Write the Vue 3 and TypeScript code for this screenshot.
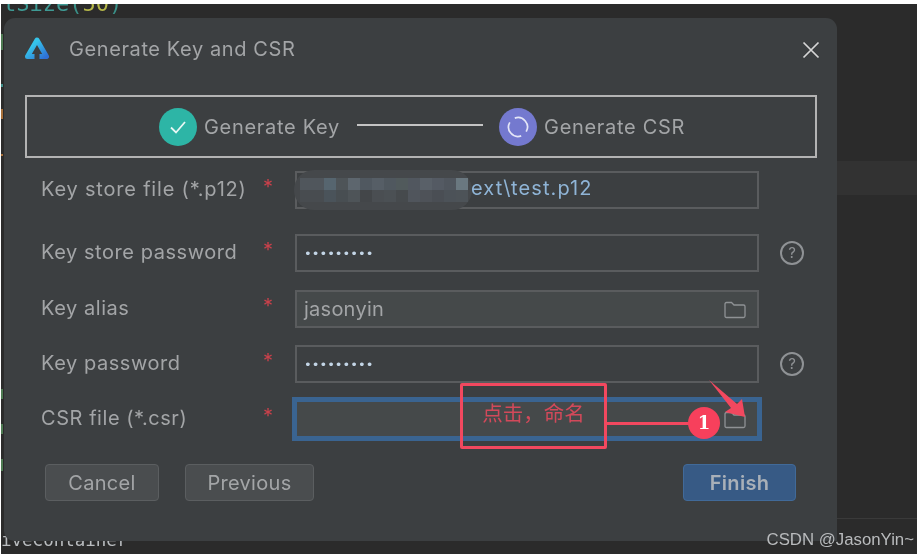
<template>
  <div class="screen">
    <div class="editor">
      <span class="code code-top"><span class="c-name">tSize</span><span class="c-paren">(</span><span class="c-num">50</span><span class="c-paren">)</span></span>
      <span class="code code-bottom">iveContainer</span>
      <span class="band"></span>
      <span class="rule"></span>
      <span class="gutter-mark" v-for="m in gutterMarks" :key="m.y" :style="{ top: m.y + 'px', height: m.h + 'px', background: m.color }"></span>

      <div class="dialog">
        <header class="title-bar">
          <svg class="logo" width="26" height="24" viewBox="0 0 26 24">
            <defs>
              <linearGradient id="logoGrad" x1="0" y1="0" x2="1" y2="1">
                <stop offset="0.3" stop-color="#35c4ea" />
                <stop offset="1" stop-color="#2f6fd6" />
              </linearGradient>
            </defs>
            <path d="M10.5 20.5 H3.5 L13 4 L22.5 20.5 H15.5" stroke="url(#logoGrad)" stroke-width="5" stroke-linejoin="round" stroke-linecap="butt" fill="none" />
            <path d="M13 12.5 L16.5 17 H14.5 V23 H11.5 V17 H9.5 Z" fill="#3c3f41" />
          </svg>
          <span class="title">Generate Key and CSR</span>
          <svg class="close" width="18" height="18" viewBox="0 0 18 18">
            <path d="M1.5 1.5 L16.5 16.5 M16.5 1.5 L1.5 16.5" stroke="#d6d6d6" stroke-width="1.7" fill="none" />
          </svg>
        </header>

        <div class="steps">
          <span class="step-icon done">
            <svg width="22" height="22" viewBox="0 0 22 22">
              <path d="M4 11.5 L9 16.5 L18 6" stroke="#e8f7f4" stroke-width="1.8" fill="none" />
            </svg>
          </span>
          <span class="step-label">Generate Key</span>
          <span class="step-line"></span>
          <span class="step-icon active">
            <svg width="24" height="24" viewBox="0 0 24 24">
              <path d="M8.8 3.1 A9.46 9.46 0 0 1 20.2 16.7 M15.2 20.9 A9.46 9.46 0 0 1 3.8 7.3" stroke="#e4e6f7" stroke-width="1.7" fill="none" />
            </svg>
          </span>
          <span class="step-label">Generate CSR</span>
        </div>

        <div class="form">
          <div class="row" v-for="row in rows" :key="row.label" :class="{ focused: row.focused }">
            <span class="label">{{ row.label }}</span>
            <span class="star">*</span>
            <div class="input" :class="{ filled: row.filled, blue: row.blue }">
              <span class="value" :class="{ dots: row.secret }">{{ row.value }}</span>
              <svg v-if="row.folder" class="folder" width="24" height="20" viewBox="0 0 24 20">
                <path d="M2 4 Q2 2.5 3.5 2.5 L8.5 2.5 L11 5 L20.5 5 Q22 5 22 6.5 L22 16 Q22 17.5 20.5 17.5 L3.5 17.5 Q2 17.5 2 16 Z" stroke="#8f9295" stroke-width="1.3" fill="none" />
              </svg>
              <div v-if="row.mosaic" class="smudge">
                <span v-for="(c, i) in mosaic" :key="i" class="cell" :style="{ background: c }"></span>
              </div>
            </div>
            <span v-if="row.help" class="help">?</span>
          </div>
        </div>

        <footer class="buttons">
          <button class="btn cancel">Cancel</button>
          <button class="btn previous">Previous</button>
          <button class="btn finish">Finish</button>
        </footer>

        <div class="callout"><span>点击，命名</span></div>
        <span class="connector"></span>
        <span class="badge">1</span>
        <svg class="arrow" width="46" height="46" viewBox="0 0 46 46">
          <path d="M1 1 L29 25 L34 20 L37 38 L17 33 L23 29 Z" fill="#f2485f" />
        </svg>
      </div>

      <span class="watermark">CSDN @JasonYin~</span>
    </div>
  </div>
</template>

<script setup lang="ts">
interface Row {
  label: string;
  value: string;
  secret?: boolean;
  filled?: boolean;
  blue?: boolean;
  folder?: boolean;
  help?: boolean;
  focused?: boolean;
  mosaic?: boolean;
}

const rows: Row[] = [
  { label: 'Key store file (*.p12)', value: 'ext\\test.p12', blue: true, mosaic: true },
  { label: 'Key store password', value: '•••••••••', secret: true, help: true },
  { label: 'Key alias', value: 'jasonyin', filled: true, folder: true },
  { label: 'Key password', value: '•••••••••', secret: true, help: true },
  { label: 'CSR file (*.csr)', value: '', filled: true, folder: true, focused: true },
];

const gutterMarks = [
  { y: 30, h: 16, color: '#4d7a52' },
  { y: 80, h: 3, color: '#3f8f8a' },
  { y: 105, h: 10, color: '#a8703a' },
  { y: 150, h: 2, color: '#a8703a' },
  { y: 385, h: 10, color: '#4d7a52' },
  { y: 420, h: 10, color: '#4d7a52' },
  { y: 455, h: 12, color: '#4d7a52' },
];

// two rows of the pixelated part over the path
const mosaic = [
  '#50565c', '#50565c', '#56656f', '#4e5458', '#5d666e', '#505860', '#565e66',
  '#50585f', '#515a5c', '#51575f', '#596068', '#545a63', '#50565e', '#6a7880',
  '#484c50', '#484c50', '#4a535a', '#484e52', '#4e5458', '#434649', '#4a4e52',
  '#4b5054', '#464a4d', '#50555c', '#4e5258', '#4a4e54', '#4c5258', '#4d5358',
];
</script>

<style>
html,
body {
  margin: 0;
  background: #fff;
}
</style>

<style scoped>
.screen {
  width: 917px;
  height: 555px;
  box-sizing: border-box;
  padding: 4px 0 1px 1px;
  background: #fff;
  overflow: hidden;
  font-family: Inter, "Noto Sans CJK SC", sans-serif;
}

.editor {
  position: relative;
  height: 100%;
  box-sizing: border-box;
  padding: 14px 0 0 3px;
  background: #2b2b2b;
  overflow: hidden;
  filter: blur(0.4px);
}

.code {
  position: absolute;
  font-family: "DejaVu Sans Mono", monospace;
  color: #b9bcbf;
}

.code-top {
  left: 2px;
  top: -13px;
  font-size: 22px;
}

.c-name { color: #3f9a94; }
.c-paren { color: #3a9088; }
.c-num { color: #b6b84a; }

.code-bottom {
  left: 0;
  top: 526px;
  font-size: 17.5px;
}

.band {
  position: absolute;
  left: 830px;
  right: 0;
  top: 157px;
  height: 34px;
  background: #323232;
}

.rule {
  position: absolute;
  left: 830px;
  right: 0;
  top: 514px;
  height: 1px;
  background: #3a3a3a;
}

.gutter-mark {
  position: absolute;
  left: 0;
  width: 2px;
}

.dialog {
  position: relative;
  width: 833px;
  height: 523px;
  box-sizing: border-box;
  padding: 0 20px 0 21px;
  background: #3c3f41;
  border-radius: 11px 11px 0 10px;
  display: flex;
  flex-direction: column;
}

.title-bar {
  height: 63px;
  display: flex;
  align-items: center;
  box-sizing: border-box;
}

.logo {
  margin-left: -1px;
  margin-top: -4px;
  flex: none;
}

.title {
  margin-left: 19px;
  margin-top: -2px;
  font-size: 20px;
  color: #a3a5a7;
  letter-spacing: 0.6px;
}

.close {
  margin-left: auto;
  margin-right: -3px;
  margin-top: 1px;
}

.steps {
  height: 63px;
  margin-top: 14px;
  box-sizing: border-box;
  border: 2px solid #b3b3b3;
  display: flex;
  align-items: center;
  padding-left: 132px;
}

.step-icon {
  flex: none;
  width: 38px;
  height: 38px;
  border-radius: 50%;
  display: flex;
  align-items: center;
  justify-content: center;
}

.step-icon.done { background: #2db5a6; }
.step-icon.active { background: #7479cf; }

.step-label {
  margin-left: 7px;
  font-size: 20px;
  color: #a3a5a7;
  letter-spacing: 0.7px;
}

.step-line {
  width: 126px;
  height: 2px;
  margin: -3px 16px 0 17px;
  background: #c4c4c4;
}

.form {
  margin-top: 13px;
  display: flex;
  flex-direction: column;
  gap: 18px;
}

.row {
  height: 37px;
  display: flex;
  align-items: center;
  margin-left: 16px;
}

.row:nth-child(2) {
  margin-top: 8px;
}

.row:nth-child(3) {
  margin-top: 1px;
}

.label {
  width: 222px;
  flex: none;
  margin-top: -2px;
  font-size: 20px;
  color: #a3a5a7;
  letter-spacing: 0.55px;
}

.row:first-child .label {
  letter-spacing: 0.8px;
}

.star {
  width: 32px;
  flex: none;
  color: #c9414b;
  font-size: 20px;
  margin-top: -6px;
}

.input {
  position: relative;
  width: 464px;
  height: 38px;
  flex: none;
  box-sizing: border-box;
  border: 2px solid #5a5c5e;
  padding: 0 7px;
  display: flex;
  align-items: center;
}

.input.filled {
  background: #45494a;
}

.focused .input {
  border-color: #3a6491;
  box-shadow: 0 0 0 3px #3a6491;
}

.value {
  font-size: 20px;
  color: #a3a5a7;
  letter-spacing: 0.25px;
}

.blue .value {
  color: #8fb4d6;
  margin-left: 167px;
  margin-top: -4px;
  letter-spacing: 1.1px;
}

.value.dots {
  color: #c3d5e6;
  font-size: 13px;
  letter-spacing: 0.05px;
  margin-top: 2px;
  font-family: "DejaVu Sans", sans-serif;
}

.folder {
  position: absolute;
  right: 10px;
  top: 8px;
}

.smudge {
  position: absolute;
  left: -3px;
  top: -3px;
  width: 178px;
  height: 40px;
  box-sizing: border-box;
  padding-left: 6px;
  border-radius: 20px;
  background: #45484b;
  overflow: hidden;
  display: grid;
  grid-template-columns: repeat(14, 12px);
  grid-auto-rows: 12px;
  align-content: center;
  filter: blur(0.6px);
}

.help {
  width: 24px;
  height: 24px;
  margin-left: 21px;
  box-sizing: border-box;
  border: 2px solid #8f9295;
  border-radius: 50%;
  font-size: 15px;
  line-height: 20px;
  text-align: center;
  color: #8f9295;
}

.buttons {
  margin-top: 27px;
  margin-left: 20px;
  display: flex;
  gap: 26px;
  width: 751px;
}

.btn {
  height: 37px;
  box-sizing: border-box;
  border: 1px solid #5b5e60;
  border-radius: 4px;
  background: #4a4d4f;
  color: #a3a5a7;
  font-family: Inter, sans-serif;
  font-size: 20px;
  letter-spacing: 0.3px;
  padding: 0;
}

.cancel { width: 114px; }
.previous { width: 129px; }

.finish {
  width: 113px;
  margin-left: auto;
  background: #375a85;
  border-color: #416a99;
  color: #a9b0b8;
  font-weight: 600;
}

.callout {
  position: absolute;
  left: 456px;
  top: 365px;
  width: 147px;
  height: 66px;
  box-sizing: border-box;
  border: 3px solid #f2485f;
  border-radius: 2px;
  display: flex;
  justify-content: center;
  padding-top: 14px;
  font-size: 20.5px;
  color: #d2495a;
  line-height: 28px;
}

.connector {
  position: absolute;
  left: 603px;
  top: 404px;
  width: 84px;
  height: 3px;
  background: #f2485f;
}

.badge {
  position: absolute;
  left: 684px;
  top: 389px;
  width: 32px;
  height: 32px;
  border-radius: 50%;
  background: #f7405c;
  color: #fff;
  font-family: "DejaVu Serif", serif;
  font-weight: 700;
  font-size: 18px;
  line-height: 32px;
  text-align: center;
}

.arrow {
  position: absolute;
  left: 704px;
  top: 361px;
}

.watermark {
  position: absolute;
  right: 3px;
  top: 526px;
  font-family: "Liberation Sans", sans-serif;
  font-size: 16.8px;
  color: #b9bbbd;
}
</style>
